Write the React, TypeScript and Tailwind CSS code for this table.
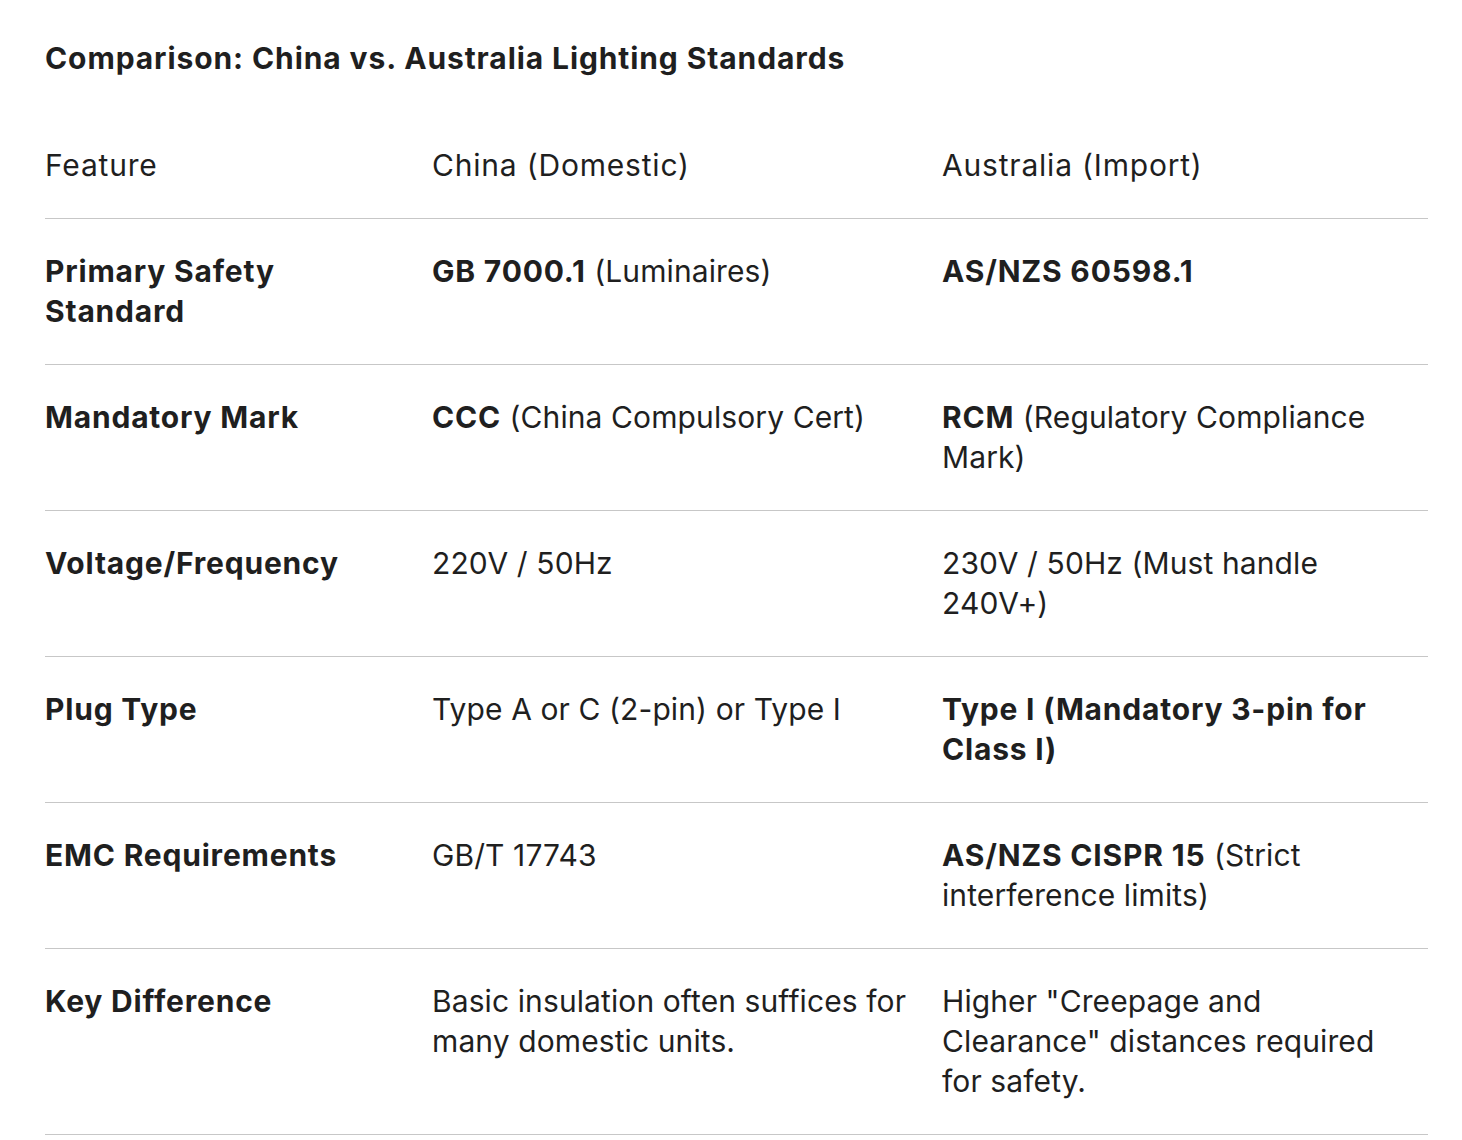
import React from 'react';

type Cell = { bold?: string; rest?: string };

const rows: { feature: string; china: Cell; aus: Cell }[] = [
  {
    feature: 'Primary Safety Standard',
    china: { bold: 'GB 7000.1', rest: ' (Luminaires)' },
    aus: { bold: 'AS/NZS 60598.1' },
  },
  {
    feature: 'Mandatory Mark',
    china: { bold: 'CCC', rest: ' (China Compulsory Cert)' },
    aus: { bold: 'RCM', rest: ' (Regulatory Compliance Mark)' },
  },
  {
    feature: 'Voltage/Frequency',
    china: { rest: '220V / 50Hz' },
    aus: { rest: '230V / 50Hz (Must handle 240V+)' },
  },
  {
    feature: 'Plug Type',
    china: { rest: 'Type A or C (2-pin) or Type I' },
    aus: { bold: 'Type I (Mandatory 3-pin for Class I)' },
  },
  {
    feature: 'EMC Requirements',
    china: { rest: 'GB/T 17743' },
    aus: { bold: 'AS/NZS CISPR 15', rest: ' (Strict interference limits)' },
  },
  {
    feature: 'Key Difference',
    china: { rest: 'Basic insulation often suffices for many domestic units.' },
    aus: { rest: 'Higher "Creepage and Clearance" distances required for safety.' },
  },
];

function CellText({ cell }: { cell: Cell }) {
  return (
    <>
      {cell.bold && <span className="font-bold tracking-[0.8px]">{cell.bold}</span>}
      {cell.rest}
    </>
  );
}

export default function App() {
  return (
    <div className="min-h-screen bg-white pl-[45px] pr-[34px] pt-[38px] text-[#1f1f1f] font-['Inter',sans-serif]">
      <h2 className="text-[30px] leading-[40px] font-bold tracking-[0.9px]">
        Comparison: China vs. Australia Lighting Standards
      </h2>
      <table className="mt-[67px] w-[1383px] table-fixed border-collapse text-[30px] leading-[40px] tracking-[0.1px]">
        <colgroup>
          <col className="w-[387px]" />
          <col className="w-[510px]" />
          <col className="w-[486px]" />
        </colgroup>
        <thead>
          <tr className="border-b border-[#c7c7c7]">
            <th className="pb-[33px] pr-4 text-left align-top font-normal tracking-[0.8px]">Feature</th>
            <th className="pb-[33px] pr-4 text-left align-top font-normal tracking-[0.8px]">China (Domestic)</th>
            <th className="pb-[33px] pr-4 text-left align-top font-normal tracking-[0.8px]">Australia (Import)</th>
          </tr>
        </thead>
        <tbody>
          {rows.map((r) => (
            <tr key={r.feature} className="border-b border-[#c7c7c7]">
              <td className="pt-[32px] pb-[33px] pr-4 align-top font-bold tracking-[0.8px]">{r.feature}</td>
              <td className="pt-[32px] pb-[33px] pr-4 align-top">
                <CellText cell={r.china} />
              </td>
              <td className="pt-[32px] pb-[33px] pr-4 align-top">
                <CellText cell={r.aus} />
              </td>
            </tr>
          ))}
        </tbody>
      </table>
    </div>
  );
}
